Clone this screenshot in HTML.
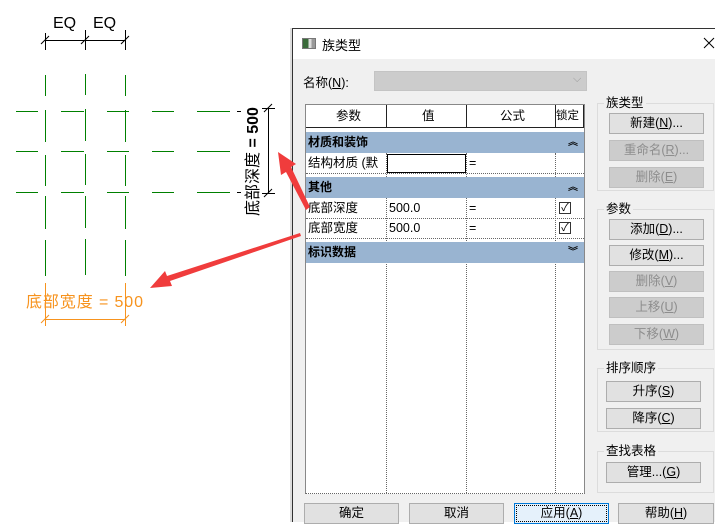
<!DOCTYPE html>
<html><head><meta charset="utf-8"><style>
*{margin:0;padding:0;box-sizing:border-box}
body{width:723px;height:522px;background:#fff;position:relative;overflow:hidden;font-family:"Liberation Sans","Noto Sans CJK SC",sans-serif;font-size:12px;color:#000}
.a{position:absolute}
.btn{position:absolute;height:21px;background:#e1e1e1;border:1px solid #adadad;text-align:center;line-height:19px;font-size:12.5px;white-space:nowrap}
.dis{background:#cccccc;border-color:#bfbfbf;color:#8d8d8d}
.gb{position:absolute;border:1px solid #dcdcdc}
.gl{position:absolute;background:#f0f0f0;padding:0 2px;font-size:12.5px;line-height:14px}
.grp{position:absolute;left:306px;width:278px;height:21px;background:#99b4d1;font-weight:bold;line-height:21px;padding-left:2px}
.cell{position:absolute;line-height:20px;padding-left:2px;font-size:12.5px}
</style></head><body>

<svg class="a" style="left:0;top:0" width="300" height="340">
<g stroke="#008000" stroke-width="1.2" fill="none" shape-rendering="crispEdges">
<path d="M45.5 75V96M45.5 110V142M45.5 155V186M45.5 196V229M45.5 240V276"/>
<path d="M85.5 74V95M85.5 109V141M85.5 154V185M85.5 196V228M85.5 239V275"/>
<path d="M125.5 75V96M125.5 110V142M125.5 155V186M125.5 196V229M125.5 240V276"/>
<path d="M16 111.5H38M61 111.5H84M107 111.5H129M152 111.5H174M197 111.5H230"/>
<path d="M16 151.5H38M61 151.5H84M107 151.5H129M152 151.5H174M197 151.5H230"/>
<path d="M16 192.5H38M61 192.5H84M107 192.5H129M152 192.5H174M197 192.5H230"/>
</g>
<g stroke="#000" stroke-width="1" fill="none">
<path d="M45 40.5H125M45.5 33V50M85.5 30V50M125.5 30V50M41 44L49 36M81 44L89 36M121 44L129 36"/>
<path d="M268.5 108V194M262 108.5H275M262 193.5H275M264 112L272 104M264 197L272 189M237 111.5H241M237 192.5H241"/>
</g>
<text x="53" y="28" font-family="Liberation Sans" font-size="16">EQ</text>
<text x="93" y="28" font-family="Liberation Sans" font-size="16">EQ</text>
<text transform="translate(258,216) rotate(-90)" font-family="Liberation Sans,Noto Sans CJK SC,sans-serif" font-size="16">底部深度 <tspan font-weight="bold">= 500</tspan></text>
<g stroke="#f7931e" stroke-width="1" fill="none">
<path d="M45.5 283V326M125.5 283V326M45 319.5H125M41 323L49 315M121 323L129 315"/>
</g>
<text x="26" y="307" font-family="Liberation Sans,Noto Sans CJK SC,sans-serif" font-size="16" fill="#f7931e" textLength="117">底部宽度 = 500</text>
</svg>

<!-- dialog -->
<div class="a" style="left:290px;top:28px;width:2px;height:494px;background:#ddd"></div>
<div class="a" style="left:292px;top:28px;width:423px;height:494px;background:#f0f0f0;border-left:1px solid #333;border-top:1px solid #333"></div>
<div class="a" style="left:293px;top:29px;width:422px;height:30px;background:#fff"></div>
<div class="a" style="left:715px;top:28px;width:8px;height:494px;background:#fff"></div>
<div class="a" style="left:302px;top:38px;width:14px;height:11px;border:1px solid #777;background:linear-gradient(90deg,#3a6a3a 0 45%,#ddd 45% 70%,#999 70%)"></div>
<div class="a" style="left:322px;top:35px;font-size:13px">族类型</div>
<svg class="a" style="left:703px;top:37px" width="12" height="12"><path d="M1 1L11 11M11 1L1 11" stroke="#000" stroke-width="1"/></svg>

<div class="a" style="left:303px;top:72px;font-size:12.5px">名称(<u>N</u>):</div>
<div class="a" style="left:374px;top:71px;width:213px;height:20px;background:#cccccc;border:1px solid #c4c4c4"></div>
<div class="a" style="left:573px;top:73px;color:#999;font-size:11px">⌵</div>

<!-- grid -->
<div class="a" style="left:305px;top:104px;width:280px;height:390px;background:#fff;border:1px solid #888;border-bottom:1px dotted #666"></div>
<div class="a" style="left:306px;top:105px;width:278px;height:23px;border-bottom:1px solid #222"></div>
<div class="a" style="left:386px;top:105px;width:1px;height:23px;background:#222"></div>
<div class="a" style="left:466px;top:105px;width:1px;height:23px;background:#222"></div>
<div class="a" style="left:555px;top:105px;width:1px;height:23px;background:#222"></div>
<div class="a" style="left:583px;top:105px;width:1px;height:23px;background:#222"></div>
<div class="cell" style="left:334px;top:106px">参数</div>
<div class="cell" style="left:420px;top:106px">值</div>
<div class="cell" style="left:498px;top:106px">公式</div>
<div class="cell" style="left:556px;top:106px;padding:0;font-size:11.5px">锁定</div>

<div class="a" style="left:386px;top:153px;height:340px;border-left:1px dotted #666"></div>
<div class="a" style="left:466px;top:153px;height:340px;border-left:1px dotted #666"></div>
<div class="a" style="left:555px;top:153px;height:340px;border-left:1px dotted #666"></div>
<div class="a" style="left:306px;top:173px;width:278px;border-top:1px dotted #666"></div>
<div class="a" style="left:306px;top:218px;width:278px;border-top:1px dotted #666"></div>
<div class="a" style="left:306px;top:238px;width:278px;border-top:1px dotted #666"></div>

<div class="grp" style="top:132px">材质和装饰<span style="position:absolute;right:6px;font-size:10px">︽</span></div>
<div class="cell" style="left:306px;top:153px">结构材质 (默</div>
<div class="a" style="left:387px;top:154px;width:79px;height:19px;border:1px solid #000;background:#fff"></div>
<div class="cell" style="left:467px;top:153px">=</div>
<div class="grp" style="top:177px">其他<span style="position:absolute;right:6px;font-size:10px">︽</span></div>
<div class="cell" style="left:306px;top:198px">底部深度</div>
<div class="cell" style="left:387px;top:198px">500.0</div>
<div class="cell" style="left:467px;top:198px">=</div>
<div class="a" style="left:559px;top:202px;width:12px;height:12px;border:1px solid #333;background:#fff;font-size:11px;line-height:10px;text-align:center">✓</div>
<div class="cell" style="left:306px;top:218px">底部宽度</div>
<div class="cell" style="left:387px;top:218px">500.0</div>
<div class="cell" style="left:467px;top:218px">=</div>
<div class="a" style="left:559px;top:222px;width:12px;height:12px;border:1px solid #333;background:#fff;font-size:11px;line-height:10px;text-align:center">✓</div>
<div class="grp" style="top:242px">标识数据<span style="position:absolute;right:6px;font-size:10px">︾</span></div>

<!-- right groups -->
<div class="gb" style="left:597px;top:103px;width:117px;height:88px"></div>
<div class="gl" style="left:604px;top:96px">族类型</div>
<div class="btn" style="left:609px;top:113px;width:95px">新建(<u>N</u>)...</div>
<div class="btn dis" style="left:609px;top:140px;width:95px">重命名(<u>R</u>)...</div>
<div class="btn dis" style="left:609px;top:167px;width:95px">删除(<u>E</u>)</div>

<div class="gb" style="left:597px;top:209px;width:117px;height:141px"></div>
<div class="gl" style="left:604px;top:202px">参数</div>
<div class="btn" style="left:609px;top:219px;width:95px">添加(<u>D</u>)...</div>
<div class="btn" style="left:609px;top:245px;width:95px">修改(<u>M</u>)...</div>
<div class="btn dis" style="left:609px;top:271px;width:95px">删除(<u>V</u>)</div>
<div class="btn dis" style="left:609px;top:297px;width:95px">上移(<u>U</u>)</div>
<div class="btn dis" style="left:609px;top:324px;width:95px">下移(<u>W</u>)</div>

<div class="gb" style="left:597px;top:368px;width:117px;height:64px"></div>
<div class="gl" style="left:604px;top:361px">排序顺序</div>
<div class="btn" style="left:606px;top:381px;width:95px">升序(<u>S</u>)</div>
<div class="btn" style="left:606px;top:408px;width:95px">降序(<u>C</u>)</div>

<div class="gb" style="left:597px;top:451px;width:117px;height:42px"></div>
<div class="gl" style="left:604px;top:444px">查找表格</div>
<div class="btn" style="left:606px;top:462px;width:95px">管理...(<u>G</u>)</div>

<div class="btn" style="left:304px;top:503px;width:95px">确定</div>
<div class="btn" style="left:409px;top:503px;width:95px">取消</div>
<div class="btn" style="left:514px;top:503px;width:95px;background:#e5f1fb;border-color:#0078d7;outline:1px dotted #000;outline-offset:-3px">应用(<u>A</u>)</div>
<div class="btn" style="left:618px;top:503px;width:96px">帮助(<u>H</u>)</div>

<!-- red arrows -->
<svg class="a" style="left:0;top:0" width="723" height="522">
<polygon points="310,207 306,210 286,172 281,175 278,152 296,164 291,167" fill="#f03c3c"/>
<polygon points="300,233 301,236 170,281 172,286 150,288 165,271 167,276" fill="#f03c3c"/>
</svg>
</body></html>
